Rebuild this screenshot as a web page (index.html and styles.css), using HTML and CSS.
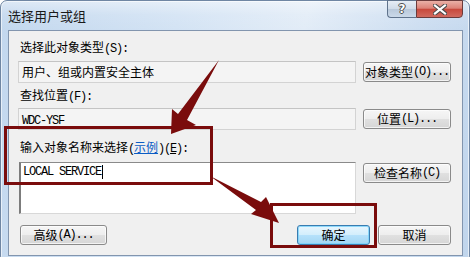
FILE: index.html
```html
<!DOCTYPE html>
<html>
<head>
<meta charset="utf-8">
<link rel="stylesheet" href="styles.css">
</head>
<body>
<div class="window">
  <div class="titlebar">
    <span class="title">选择用户或组</span>
    <div class="caption">
      <div class="cap help">?</div>
      <div class="cap close">
        <svg width="14" height="11" viewBox="0 0 14 11">
          <path d="M2 1.5 L12 9.5 M12 1.5 L2 9.5" stroke="#4a4a4a" stroke-width="4.2" stroke-linecap="square" fill="none"/>
          <path d="M2 1.5 L12 9.5 M12 1.5 L2 9.5" stroke="#ffffff" stroke-width="2.2" stroke-linecap="square" fill="none"/>
        </svg>
      </div>
    </div>
  </div>
  <div class="client">
    <div class="label">选择此对象类型<span class="a">(S):</span></div>
    <div class="row r1">
      <div class="field">用户、组或内置安全主体</div>
      <button class="btn">对象类型<span class="a">(O)...</span></button>
    </div>
    <div class="label l2">查找位置<span class="a">(F):</span></div>
    <div class="row r2">
      <div class="field"><span class="mono">WDC-YSF</span></div>
      <button class="btn">位置<span class="a">(L)...</span></button>
    </div>
    <div class="label l3">输入对象名称来选择<span class="a">(</span><span class="link">示例</span><span class="a">)(<u>E</u>):</span></div>
    <div class="row r3">
      <div class="textarea"><span class="mono">LOCAL SERVICE</span><span class="caret"></span></div>
      <button class="btn">检查名称<span class="a">(C)</span></button>
    </div>
    <div class="row footer">
      <button class="btn adv">高级<span class="a">(A)...</span></button>
      <button class="btn default ok">确定</button>
      <button class="btn cancel">取消</button>
    </div>
  </div>
</div>
<svg class="annot" width="471" height="257" viewBox="0 0 471 257">
  <rect x="5.5" y="127.5" width="206" height="56" fill="none" stroke="#7a0c0c" stroke-width="3"/>
  <rect x="271.5" y="204.5" width="104" height="42" fill="none" stroke="#7a0c0c" stroke-width="3"/>
  <polygon points="219,60 187,120 196,125 171,134 172,109 178,114" fill="#7a0c0c"/>
  <polygon points="210,176 261,202 266,197 279,223 251,214 256,210" fill="#7a0c0c"/>
</svg>
</body>
</html>
```
FILE: styles.css
```css
html, body {
  margin: 0;
  padding: 0;
  background: #ffffff;
}
body {
  width: 471px;
  height: 257px;
  overflow: hidden;
  position: relative;
  font-family: "Noto Sans CJK SC", "Noto Sans", sans-serif;
  font-size: 12px;
  color: #000;
}
.window {
  width: 470px;
  height: 262px;
  box-sizing: border-box;
  border: 1px solid #6f86a3;
  border-radius: 7px 7px 6px 6px;
  background:
    linear-gradient(180deg, rgba(255,255,255,0.45) 0px, rgba(255,255,255,0.1) 14px, rgba(255,255,255,0) 30px),
    linear-gradient(100deg, #c2d7ee 0%, #d3e3f4 35%, #e2ecf7 60%, #cadcf0 85%, #c0d5ec 100%);
  box-shadow: inset 0 0 0 1px rgba(255,255,255,0.6);
}
.titlebar {
  height: 29px;
  display: flex;
  align-items: flex-start;
}
.title {
  padding-left: 7px;
  line-height: 29px;
  font-size: 13px;
  color: #1a1a1a;
}
.caption {
  margin-left: auto;
  margin-right: 6px;
  display: flex;
  margin-top: -1px;
}
.cap {
  height: 18px;
  box-sizing: border-box;
  display: flex;
  align-items: center;
  justify-content: center;
  border: 1px solid #5f738c;
}
.help {
  width: 29px;
  border-right: none;
  border-radius: 0 0 0 4px;
  background: linear-gradient(180deg, #e6edf5 0%, #cfdbe8 50%, #b8c8da 51%, #cbd9e9 100%);
  color: #fff;
  font-family: "DejaVu Sans", sans-serif;
  font-weight: bold;
  font-size: 12px;
  text-shadow: 0 0 1px #333, 1px 0 0 #555, -1px 0 0 #555, 0 1px 0 #555, 0 -1px 0 #555;
}
.close {
  width: 47px;
  border-radius: 0 0 4px 0;
  background: linear-gradient(180deg, #eab0a6 0%, #dc8277 45%, #c8493c 52%, #d16a5f 100%);
  border-color: #6b3b3b;
}
.client {
  margin-left: 7px;
  width: 455px;
  box-sizing: border-box;
  background: #f0f0f0;
  border: 1px solid #8295ae;
  padding: 8px 11px 10px 9px;
}
.label {
  line-height: 16px;
  padding-left: 2px;
  white-space: nowrap;
}
.a, .mono {
  font-family: "Liberation Mono", monospace;
  font-size: 12px;
  letter-spacing: -1.2px;
}
.link {
  color: #0b5cc4;
  text-decoration: underline;
}
.l2 { margin-top: 4px; }
.l3 { margin-top: 9px; }
.row {
  display: flex;
  gap: 7px;
  align-items: center;
}
.r1 { margin-top: 4px; }
.r2 { margin-top: 3px; }
.r3 { margin-top: 5px; align-items: flex-start; }
.field {
  width: 338px;
  height: 22px;
  box-sizing: border-box;
  border: 1px solid #d3d3d3;
  border-top-color: #c4c4c4;
  background: #f4f4f4;
  padding-left: 3px;
  line-height: 20px;
  white-space: nowrap;
}
.textarea {
  width: 337px;
  margin-left: 1px;
  height: 52px;
  box-sizing: border-box;
  border: 1px solid #d8d8d8;
  border-left: 2px solid #7c7c7c;
  border-top: 1px solid #8a8a8a;
  background: #ffffff;
  padding: 2px 0 0 2px;
  line-height: 14px;
  display: flex;
  align-items: flex-start;
}
.caret {
  display: inline-block;
  width: 1px;
  height: 14px;
  background: #000;
  margin-left: 1px;
}
.btn {
  width: 88px;
  height: 20px;
  box-sizing: border-box;
  border: 1px solid #8a8a8a;
  border-radius: 3px;
  background: linear-gradient(180deg, #f6f6f6 0%, #eeeeee 48%, #e0e0e0 52%, #d6d6d6 100%);
  box-shadow: inset 0 0 0 1px rgba(255,255,255,0.7);
  font-family: "Noto Sans CJK SC", "Noto Sans", sans-serif;
  font-size: 12px;
  line-height: 16px;
  padding: 0;
  color: #000;
  white-space: nowrap;
  display: flex;
  align-items: center;
  justify-content: center;
}
.r3 .btn { margin-top: 1px; }
.footer {
  margin-top: 11px;
  gap: 0;
  padding-left: 2px;
}
.adv { width: 87px; }
.ok {
  width: 73px;
  margin-left: 190px;
}
.cancel {
  width: 73px;
  margin-left: 8px;
}
.default {
  border-color: #3a7cb0;
  background: linear-gradient(180deg, #e8f6fe 0%, #d3eefc 48%, #b5e1fb 52%, #a3d6f3 100%);
  box-shadow: inset 0 0 0 1px rgba(120,210,250,0.8);
}
.annot {
  position: absolute;
  left: 0;
  top: 0;
  pointer-events: none;
}
```
